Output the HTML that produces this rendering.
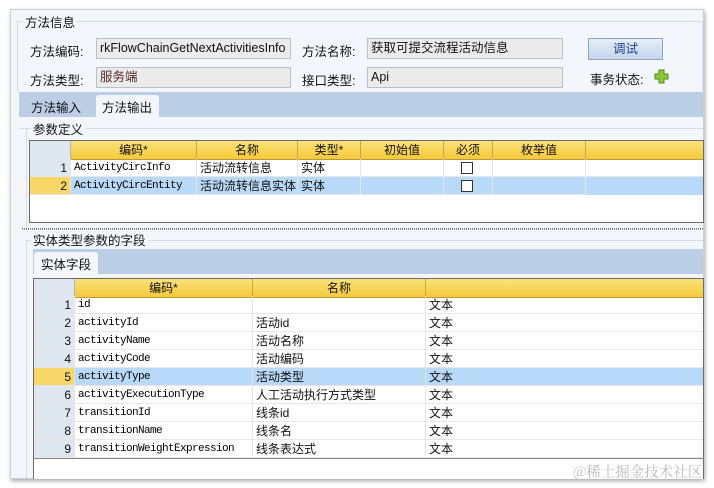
<!DOCTYPE html><html><head><meta charset="utf-8"><style>
*{margin:0;padding:0;box-sizing:border-box}
body{width:714px;height:488px;background:#fff;position:relative;overflow:hidden;font-family:"Liberation Sans","Noto Sans CJK SC",sans-serif;font-size:12px;color:#111}
.a{position:absolute}
.win{left:10px;top:9px;width:694px;height:470px;background:#f3f7fc;border:1px solid #c9cfd6;box-shadow:1px 2px 4px rgba(0,0,0,.35)}
.inp{background:#ebebeb;border:1px solid #b6bfcc;height:21px;line-height:19px;padding-left:3px;font-size:12.5px;overflow:hidden;white-space:nowrap}
.lbl{font-size:12.5px}
.grid{background:#fff;border:1px solid #6b6b6b;overflow:hidden}
.hd{background:linear-gradient(#fbe27a,#f7c93a);border-bottom:1px solid #b79a3c;height:19px}
.hd div{position:absolute;top:0;height:18px;line-height:18px;text-align:center;border-right:1px solid #c8a64a;font-size:12px}
.rn{background:#dfe7f1;border-right:1px solid #a9b6c6;border-bottom:1px solid #c4cfdc;text-align:right;padding-right:3px;font-size:12px}
.row{position:absolute;height:18px;line-height:18px;white-space:nowrap}
.row div{position:absolute;top:0;height:18px;border-right:1px solid #e6e6e6;border-bottom:1px solid #e6e6e6;padding-left:3px;overflow:hidden}
.row div.mono{font-family:"Liberation Mono","DejaVu Sans Mono",monospace;font-size:11px;letter-spacing:-0.6px;line-height:13px;padding-top:3px;color:#000}
.cb{position:absolute;width:12px;height:12px;border:1px solid #333;background:#fff;top:3px}
</style></head><body>
<div class="a win"></div>
<div class="a" style="left:17px;top:21px;width:686px;height:70px;border:1px solid #d6dde6;border-bottom:none"></div>
<div class="a lbl" style="left:23px;top:12px;background:#f3f7fc;padding:0 2px">方法信息</div>
<div class="a lbl" style="left:30px;top:41px">方法编码:</div>
<div class="a inp" style="left:96px;top:38px;width:195px">rkFlowChainGetNextActivitiesInfo</div>
<div class="a lbl" style="left:302px;top:41px">方法名称:</div>
<div class="a inp" style="left:367px;top:38px;width:196px">获取可提交流程活动信息</div>
<div class="a" style="left:588px;top:38px;width:75px;height:22px;border:1px solid #8fa6c3;background:linear-gradient(#e6eef8,#c5d5ea);text-align:center;line-height:20px;color:#1c3f8a;font-size:12.5px">调试</div>
<div class="a lbl" style="left:30px;top:70px">方法类型:</div>
<div class="a inp" style="left:96px;top:67px;width:195px;color:#5a2a2a">服务端</div>
<div class="a lbl" style="left:302px;top:70px">接口类型:</div>
<div class="a inp" style="left:367px;top:67px;width:196px">Api</div>
<div class="a lbl" style="left:590px;top:69px">事务状态:</div>
<svg class="a" style="left:654px;top:69px" width="15" height="15" viewBox="0 0 15 15"><path d="M5 1h5v4h4v5h-4v4H5v-4H1V5h4z" fill="#8cc83a" stroke="#4f8a18" stroke-width="1"/></svg>
<div class="a" style="left:19px;top:92px;width:684px;height:25px;background:#bccde6"></div>
<div class="a lbl" style="left:31px;top:97px">方法输入</div>
<div class="a lbl" style="left:96px;top:95px;width:63px;height:23px;background:#f3f7fc;border-radius:3px 3px 0 0;padding:2px 0 0 6px">方法输出</div>
<div class="a" style="left:19px;top:117px;width:684px;height:12px;border-bottom:1px solid #d6dde6"></div>
<div class="a" style="left:26px;top:128px;width:677px;height:100px;border-left:1px solid #d6dde6"></div>
<div class="a lbl" style="left:31px;top:119px;background:#f3f7fc;padding:0 2px">参数定义</div>
<div class="a grid" style="left:29px;top:140px;width:675px;height:83px">
 <div class="a hd" style="left:0;top:0;width:675px">
  <div style="left:0;width:41px;background:#dfe7f1;border-right:1px solid #a9b6c6"></div>
  <div style="left:41px;width:126px">编码*</div>
  <div style="left:167px;width:101px">名称</div>
  <div style="left:268px;width:63px">类型*</div>
  <div style="left:331px;width:83px">初始值</div>
  <div style="left:414px;width:49px">必须</div>
  <div style="left:463px;width:93px">枚举值</div>
 </div>
 <div class="row" style="left:0;top:18px;width:675px">
  <div class="rn" style="left:0;width:41px">1</div>
  <div class="mono" style="left:41px;width:126px">ActivityCircInfo</div>
  <div style="left:167px;width:101px">活动流转信息</div>
  <div style="left:268px;width:63px">实体</div>
  <div style="left:331px;width:83px"></div>
  <div style="left:414px;width:49px"><span class="cb" style="left:17px"></span></div>
  <div style="left:463px;width:93px"></div><div style="left:556px;width:119px"></div>
 </div>
 <div class="row" style="left:0;top:36px;width:675px;background:#b9d9f8">
  <div class="rn" style="left:0;width:41px;background:#f8d668">2</div>
  <div class="mono" style="left:41px;width:126px">ActivityCircEntity</div>
  <div style="left:167px;width:101px">活动流转信息实体</div>
  <div style="left:268px;width:63px">实体</div>
  <div style="left:331px;width:83px"></div>
  <div style="left:414px;width:49px"><span class="cb" style="left:17px"></span></div>
  <div style="left:463px;width:93px"></div>
 </div>
</div>
<div class="a" style="left:22px;top:228px;width:681px;height:2px;border-top:1px dotted #777;border-bottom:1px dotted #999"></div>
<div class="a" style="left:26px;top:240px;width:677px;height:238px;border-left:1px solid #d6dde6;border-top:1px solid #d6dde6"></div>
<div class="a lbl" style="left:31px;top:230px;background:#f3f7fc;padding:0 2px">实体类型参数的字段</div>
<div class="a" style="left:33px;top:249px;width:670px;height:25px;background:#bccde6"></div>
<div class="a lbl" style="left:34px;top:252px;width:64px;height:22px;background:#f3f7fc;border-radius:3px 3px 0 0;padding:2px 0 0 7px">实体字段</div>
<div class="a grid" style="left:33px;top:278px;width:671px;height:201px;border-bottom:none">
 <div class="a hd" style="left:0;top:0;width:671px">
  <div style="left:0;width:41px;background:#dfe7f1;border-right:1px solid #a9b6c6"></div>
  <div style="left:41px;width:178px">编码*</div>
  <div style="left:219px;width:173px">名称</div>
  <div style="left:392px;width:290px;text-align:right;border:none">类</div>
 </div>
</div>
<div class="a" style="left:33px;top:458px;width:671px;height:1px;background:#888"></div>
<div id="g2" class="a" style="left:33px;top:296px;width:670px;height:162px;overflow:hidden"></div>
<div class="a" style="left:573px;top:461px;color:#bbb;font-size:14.5px;font-family:'Noto Serif CJK SC','Liberation Serif',serif">@稀土掘金技术社区</div>
<script>
var d=[["id",""],["activityId","活动id"],["activityName","活动名称"],["activityCode","活动编码"],["activityType","活动类型"],["activityExecutionType","人工活动执行方式类型"],["transitionId","线条id"],["transitionName","线条名"],["transitionWeightExpression","线条表达式"]];
var h="";d.forEach(function(r,i){var s=i==4;h+='<div class="row" style="left:1px;top:'+(i*18)+'px;width:670px;'+(s?'background:#b9d9f8':'')+'"><div class="rn" style="left:0;width:41px;'+(s?'background:#f8d668':'')+'">'+(i+1)+'</div><div class="mono" style="left:41px;width:178px">'+r[0]+'</div><div style="left:219px;width:173px">'+r[1]+'</div><div style="left:392px;width:290px">文本</div></div>'});
document.getElementById("g2").innerHTML=h;
</script>
</body></html>
